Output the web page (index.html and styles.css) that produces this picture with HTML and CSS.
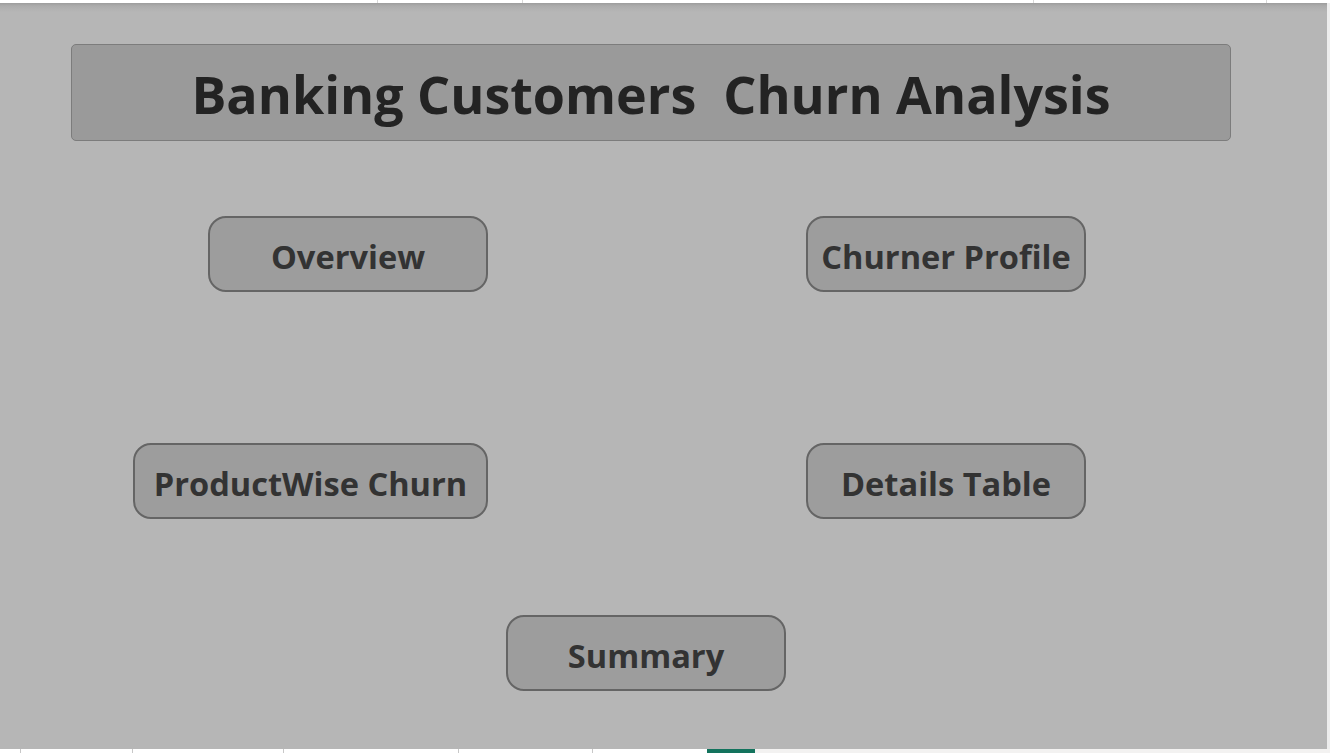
FILE: index.html
```html
<!DOCTYPE html>
<html>
<head>
<meta charset="utf-8">
<link rel="stylesheet" href="styles.css">
</head>
<body>
<div class="page">
  <div class="topbar">
    <div class="cell c1"></div>
    <div class="cell c2"></div>
    <div class="cell c3"></div>
    <div class="cell c4"></div>
    <div class="cell c5"></div>
  </div>
  <div class="middle">
    <div class="sheet">
      <div class="title-box">Banking Customers&nbsp; Churn Analysis</div>
      <div class="nav-grid">
        <div class="btn overview">Overview</div>
        <div class="btn churner">Churner Profile</div>
        <div class="btn product">ProductWise Churn</div>
        <div class="btn details">Details Table</div>
        <div class="btn summary">Summary</div>
      </div>
    </div>
    <div class="edge"></div>
  </div>
  <div class="bottombar">
    <div class="bcell b1"></div>
    <div class="bcell b2"></div>
    <div class="bcell b3"></div>
    <div class="bcell b4"></div>
    <div class="bcell b5"></div>
    <div class="bcell b6"></div>
    <div class="tab-active"></div>
    <div class="tab-rest"></div>
  </div>
</div>
</body>
</html>
```
FILE: styles.css
```css
html, body {
  margin: 0;
  padding: 0;
  background: #ffffff;
}
.page {
  width: 1330px;
  height: 753px;
  display: flex;
  flex-direction: column;
  overflow: hidden;
  font-family: "Open Sans", "Noto Sans", "Liberation Sans", sans-serif;
}
.topbar {
  height: 3px;
  display: flex;
  background: #ffffff;
}
.cell { border-right: 1px solid #d8d8d8; }
.c1 { width: 377px; }
.c2 { width: 144px; }
.c3 { width: 510px; }
.c4 { width: 232px; }
.c5 { flex: 1; border-right: none; }
.middle {
  flex: 1;
  display: flex;
}
.sheet {
  width: 1327px;
  background: linear-gradient(to bottom, #9c9c9c 0px, #acacac 3px, #b6b6b6 9px) #b6b6b6;
  display: flex;
  flex-direction: column;
}
.edge {
  flex: 1;
  background: #ededed;
}
.title-box {
  margin: 41px 0 0 71px;
  width: 1158px;
  height: 93px;
  border: 1px solid #7c7c7c;
  border-radius: 5px;
  background: #9a9a9a;
  display: flex;
  align-items: center;
  justify-content: center;
  padding-top: 2px;
  box-sizing: content-box;
  font-weight: 700;
  font-size: 52px;
  color: #232323;
  white-space: pre;
}
.nav-grid {
  margin: 75px 0 0 133px;
  display: grid;
  grid-template-columns: 355px 318px 280px;
  grid-template-rows: 76px 151px 76px 96px 76px;
}
.btn {
  box-sizing: border-box;
  height: 76px;
  width: 280px;
  padding-top: 5px;
  border: 2px solid #656565;
  border-radius: 18px;
  background: #9d9d9d;
  display: flex;
  align-items: center;
  justify-content: center;
  font-weight: 700;
  font-size: 32.6px;
  color: #333333;
  white-space: nowrap;
}
.overview { grid-column: 1; grid-row: 1; justify-self: end; }
.churner { grid-column: 3; grid-row: 1; }
.product { grid-column: 1; grid-row: 3; width: 355px; }
.details { grid-column: 3; grid-row: 3; }
.summary { grid-column: 2; grid-row: 5; justify-self: start; margin-left: 18px; }
.bottombar {
  height: 4px;
  display: flex;
  background: #ffffff;
}
.bcell { border-right: 1px solid #c8c8c8; }
.b1 { width: 20px; }
.b2 { width: 111px; }
.b3 { width: 150px; }
.b4 { width: 174px; }
.b5 { width: 133px; }
.b6 { width: 114px; border-right: none; }
.tab-active { width: 48px; background: #13735d; }
.tab-rest { flex: 1; background: #f3f2f1; }
```
